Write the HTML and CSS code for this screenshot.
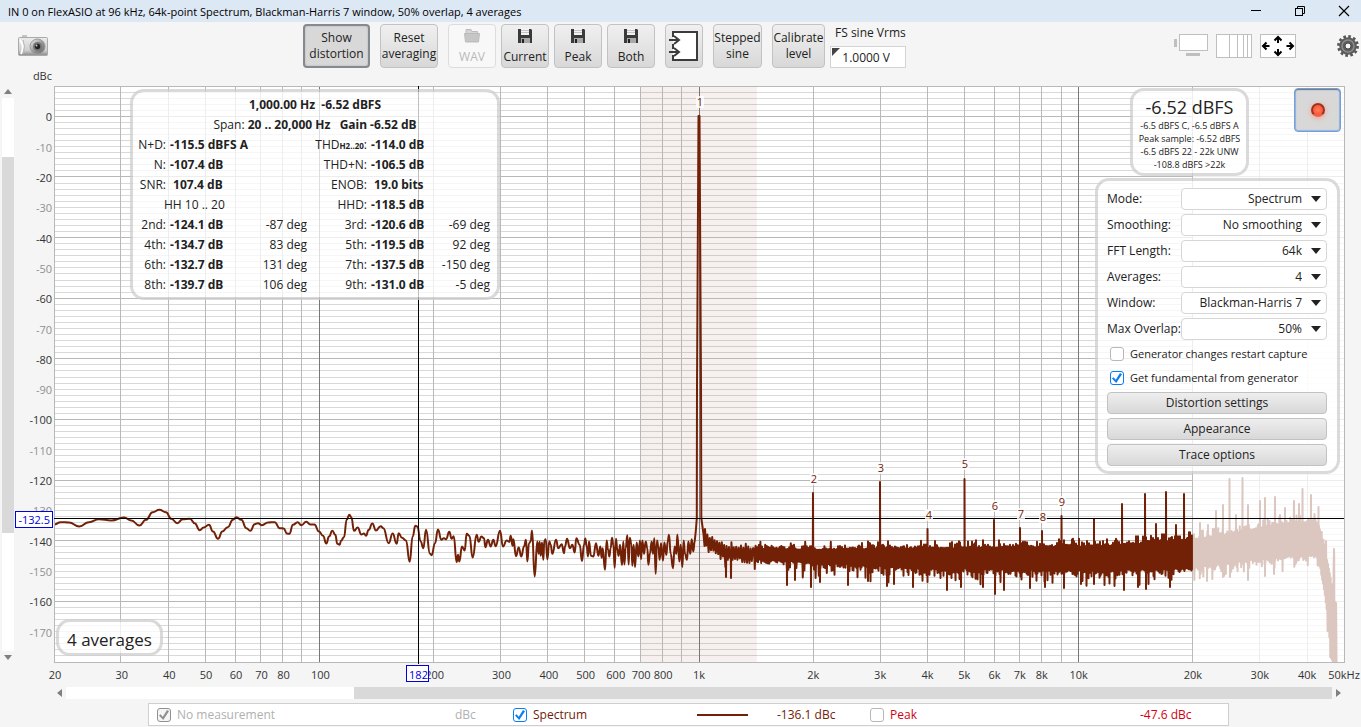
FILE: index.html
```html
<!DOCTYPE html>
<html lang="en">
<head>
<meta charset="utf-8">
<title>Spectrum analyser</title>
<link rel="stylesheet" href="styles.css">
</head>
<body>
<header class="titlebar">
  <h1 class="title">IN 0 on FlexASIO at 96 kHz, 64k-point Spectrum, Blackman-Harris 7 window, 50% overlap, 4 averages</h1>
  <div class="window-buttons">
    <button class="window-button" aria-label="Minimize"><svg width="12" height="12"><path d="M1 5.500h10" stroke="#000"/></svg></button>
    <button class="window-button" aria-label="Restore"><svg width="12" height="12" fill="none" stroke="#000"><rect x="1.500" y="3.500" width="7" height="7"/><path d="M3.500 3.500v-2h7v7h-2"/></svg></button>
    <button class="window-button" aria-label="Close"><svg width="12" height="12"><path d="M1 1l10 10M11 1L1 11" stroke="#000" stroke-width="1.200"/></svg></button>
  </div>
</header>

<nav class="toolbar">
  <button class="icon-button camera" aria-label="Capture image">
    <svg width="30" height="22" viewBox="0 0 30 22">
      <defs>
        <linearGradient id="body" x1="0" y1="0" x2="0" y2="1"><stop offset="0" stop-color="#ececec"/><stop offset=".7" stop-color="#d0d0d0"/><stop offset="1" stop-color="#8a8a8a"/></linearGradient>
        <linearGradient id="ring" x1="0" y1="0" x2="1" y2="1"><stop offset="0" stop-color="#f4f4f4"/><stop offset=".5" stop-color="#9a9a9a"/><stop offset="1" stop-color="#666"/></linearGradient>
      </defs>
      <rect x="4" y="0" width="5" height="2" fill="#c4c4c4"/>
      <rect x=".5" y="2.500" width="29" height="18" rx="1" fill="url(#body)" stroke="#aaa"/>
      <path d="M2 5q5 6 1 14" fill="none" stroke="#fff" stroke-width="2"/>
      <path d="M5 5q3 6 0 14" fill="none" stroke="#b5b5b5"/>
      <circle cx="19.500" cy="11.500" r="7.500" fill="url(#ring)" stroke="#999"/>
      <circle cx="19.500" cy="11.500" r="4.500" fill="#777"/>
      <circle cx="19.500" cy="11.500" r="2.700" fill="#222"/>
      <circle cx="18.500" cy="10.500" r="1" fill="#c8c8c8"/>
    </svg>
  </button>
  <div class="tools">
    <button class="tool tool-show is-pressed" aria-pressed="true">Show<br>distortion</button>
    <button class="tool tool-reset">Reset<br>averaging</button>
    <button class="tool tool-save" disabled>
      <svg width="16" height="16" viewBox="0 0 16 16"><path d="M2 3.500v-2h5l1 2h5.500v3h-11.500z" fill="#d4d4d4" stroke="#bbb"/><path d="M.5 5.500h15l-1 8.500h-13z" fill="#c6c6c6" stroke="#bbb"/></svg>
      <span>WAV</span></button>
    <div class="save-group">
      <button class="tool tool-save"><svg width="16" height="16" viewBox="0 0 16 16"><use href="#disk"/></svg><span>Current</span></button>
      <button class="tool tool-save"><svg width="16" height="16" viewBox="0 0 16 16"><use href="#disk"/></svg><span>Peak</span></button>
      <button class="tool tool-save"><svg width="16" height="16" viewBox="0 0 16 16"><use href="#disk"/></svg><span>Both</span></button>
    </div>
    <button class="tool tool-input" aria-label="Input setup">
      <svg width="32" height="32" viewBox="0 0 32 32" fill="none" stroke="#3c3c3c" stroke-width="2"><path d="M5 2h24v28H5z" fill="#fff" stroke="none"/><path d="M5 7V2h24v28H5v-5M5 14v5"/><path d="M1 10h10M6 6l5 4-5 4M1 22h10M6 18l5 4-5 4"/></svg>
    </button>
    <button class="tool tool-stepped">Stepped<br>sine</button>
    <button class="tool tool-cal">Calibrate<br>level</button>
  </div>
  <div class="vrms">
    <label for="vrms">FS sine Vrms</label>
    <div class="vrms-box"><input id="vrms" class="vrms-input" type="text" value="1.0000 V"></div>
  </div>
  <div class="view-buttons">
    <button class="icon-button" aria-label="Scrollbars"><svg width="36" height="24" viewBox="0 0 36 24"><rect x="7.500" y=".5" width="28" height="16" fill="#fff" stroke="#bfbfbf"/><rect x="2" y="5" width="3" height="8" fill="#bfbfbf"/><rect x="14" y="19" width="14" height="3" fill="#bfbfbf"/></svg></button>
    <button class="icon-button" aria-label="Frequency axis"><svg width="36" height="24" viewBox="0 0 36 24"><rect x=".5" y=".5" width="35" height="23" fill="#fff" stroke="#bfbfbf"/><path d="M13.500 0v24M21.500 0v24M27.500 0v24M31.500 0v24" stroke="#bfbfbf"/></svg></button>
    <button class="icon-button" aria-label="Graph limits"><svg width="36" height="24" viewBox="0 0 36 24"><rect x=".5" y=".5" width="35" height="23" fill="#fff" stroke="#bfbfbf"/><g fill="none" stroke="#000" stroke-width="2"><path d="M18 3v6M14.500 6.500L18 3l3.500 3.500M18 15v6M14.500 17.500L18 21l3.500-3.500M3 12h6.500M6.500 8.500L3 12l3.500 3.500M26.500 12H33M29.500 8.500L33 12l-3.500 3.500"/></g></svg></button>
    <button class="icon-button gear" aria-label="Settings"><svg width="22" height="22" viewBox="0 0 22 22"><circle cx="11" cy="11" r="9.500" fill="none" stroke="#555" stroke-width="2.800" stroke-dasharray="2.600 2.374"/><circle cx="11" cy="11" r="5.800" fill="none" stroke="#5c5c5c" stroke-width="6"/><circle cx="11" cy="11" r="6" fill="none" stroke="#8c8c8c" stroke-width="1.500"/><circle cx="11" cy="11" r="3" fill="#f5f5f5" stroke="#444"/></svg></button>
  </div>
</nav>

<main class="workspace">
  <div class="vscroll">
    <span class="arrow arrow-up"></span>
    <div class="vtrack"><div class="vthumb"></div></div>
    <span class="arrow arrow-down"></span>
  </div>
  <section class="chart">
    <svg id="plot" class="plot" role="img" aria-label="Spectrum plot"></svg>

    <div class="panel distortion">
      <table class="readout">
        <colgroup><col class="c-label"><col class="c-value"><col class="c-deg"><col class="c-label2"><col class="c-value"><col></colgroup>
        <tr><td colspan="6" class="head"><b>1,000.00 Hz &nbsp;-6.52 dBFS</b></td></tr>
        <tr><td colspan="6" class="head">Span: <b>20 .. 20,000 Hz &nbsp; Gain -6.52 dB</b></td></tr>
        <tr><th>N+D:</th><td colspan="2"><b>-115.5 dBFS A</b></td><th>THD<small>H2..20</small>:</th><td><b>-114.0 dB</b></td><td></td></tr>
        <tr><th>N:</th><td><b>-107.4 dB</b></td><td></td><th>THD+N:</th><td><b>-106.5 dB</b></td><td></td></tr>
        <tr><th>SNR:</th><td><b>&nbsp;107.4 dB</b></td><td></td><th>ENOB:</th><td><b>&nbsp;19.0 bits</b></td><td></td></tr>
        <tr><td colspan="3" class="hh">HH 10 .. 20</td><th>HHD:</th><td><b>-118.5 dB</b></td><td></td></tr>
        <tr><th>2nd:</th><td><b>-124.1 dB</b></td><td class="deg">-87 deg</td><th>3rd:</th><td><b>-120.6 dB</b></td><td class="deg last">-69 deg</td></tr>
        <tr><th>4th:</th><td><b>-134.7 dB</b></td><td class="deg">83 deg</td><th>5th:</th><td><b>-119.5 dB</b></td><td class="deg last">92 deg</td></tr>
        <tr><th>6th:</th><td><b>-132.7 dB</b></td><td class="deg">131 deg</td><th>7th:</th><td><b>-137.5 dB</b></td><td class="deg last">-150 deg</td></tr>
        <tr><th>8th:</th><td><b>-139.7 dB</b></td><td class="deg">106 deg</td><th>9th:</th><td><b>-131.0 dB</b></td><td class="deg last">-5 deg</td></tr>
      </table>
    </div>

    <div class="panel level">
      <div class="level-main">-6.52 dBFS</div>
      <div>-6.5 dBFS C, -6.5 dBFS A</div>
      <div>Peak sample: -6.52 dBFS</div>
      <div>-6.5 dBFS 22 - 22k UNW</div>
      <div>-108.8 dBFS &gt;22k</div>
    </div>

    <button class="record" aria-label="Record"><span class="record-light"></span></button>

    <form class="panel settings">
      <div class="field"><label for="mode">Mode:</label><span class="drop"><select id="mode"><option>Spectrum</option></select></span></div>
      <div class="field"><label for="smooth">Smoothing:</label><span class="drop"><select id="smooth"><option>No smoothing</option></select></span></div>
      <div class="field"><label for="fft">FFT Length:</label><span class="drop"><select id="fft"><option>64k</option></select></span></div>
      <div class="field"><label for="avg">Averages:</label><span class="drop"><select id="avg"><option>4</option></select></span></div>
      <div class="field"><label for="win">Window:</label><span class="drop"><select id="win"><option>Blackman-Harris 7</option></select></span></div>
      <div class="field"><label for="lap">Max Overlap:</label><span class="drop"><select id="lap"><option>50%</option></select></span></div>
      <div class="checks">
        <label class="check"><input type="checkbox">Generator changes restart capture</label>
        <label class="check"><input type="checkbox" checked>Get fundamental from generator</label>
      </div>
      <button type="button" class="wide">Distortion settings</button>
      <button type="button" class="wide">Appearance</button>
      <button type="button" class="wide">Trace options</button>
    </form>

    <div class="panel averages">4 averages</div>
  </section>
</main>

<div class="hscroll">
  <span class="arrow arrow-left"></span>
  <div class="htrack"><div class="hthumb"></div></div>
  <span class="arrow arrow-right"></span>
</div>

<footer class="legend">
  <label class="check muted"><input type="checkbox" checked disabled>No measurement</label>
  <span class="muted">dBc</span>
  <label class="check trace"><input type="checkbox" checked>Spectrum</label>
  <span class="swatch"></span>
  <span class="trace">-136.1 dBc</span>
  <label class="check peak"><input type="checkbox">Peak</label>
  <span class="peak">-47.6 dBc</span>
</footer>

<svg class="symbols" width="0" height="0" aria-hidden="true">
  <symbol id="disk" viewBox="0 0 16 16"><path d="M1 1h13l1 1v13H1z" fill="#3a3a3a"/><rect x="4" y="0" width="8" height="7" fill="#f2f2f2"/><path d="M4 2.500h8M4 4.500h8" stroke="#c4c4c4"/><rect x="4" y="10" width="9" height="5" fill="#a8a8a8"/><rect x="5" y="11" width="2" height="4" fill="#222"/></symbol>
</svg>
<script src="chart.js"></script>
</body>
</html>
```
FILE: styles.css
```css
* { box-sizing: border-box; }

body {
  margin: 0;
  min-height: 100vh;
  display: flex;
  flex-direction: column;
  background: #f5f5f5;
  color: #222;
  font: 12px/16px "Open Sans", "Noto Sans", sans-serif;
}

button, input, select { font: inherit; color: inherit; }
button { padding: 0; }

.titlebar {
  height: 22px;
  flex: none;
  display: flex;
  align-items: center;
  justify-content: space-between;
  padding: 0 11px 0 8px;
  background: #dde8f5;
  color: #000;
}
.title { margin: 0; padding-top: 2px; font-size: 11px; font-weight: 400; white-space: nowrap; }
.window-buttons { display: flex; gap: 32px; }
.window-button, .icon-button { border: 0; background: none; display: flex; }

.toolbar {
  height: 48px;
  flex: none;
  display: flex;
  align-items: flex-start;
  padding: 2px 2px 0 18px;
}
.camera { margin: 11px 255px 0 0; }
.tools { display: flex; gap: 10px; flex: none; }
.save-group { display: flex; gap: 5px; margin-left: -5px; }
.tool {
  height: 44px;
  border: 1px solid #c2c2c2;
  border-radius: 4px;
  background: linear-gradient(#f0f0f0, #d8d8d8);
  white-space: nowrap;
  display: flex;
  flex-direction: column;
  align-items: center;
  justify-content: center;
}
.tool:disabled { background: #f8f8f8; border-color: #dcdcdc; color: #b8b8b8; }
.tool.is-pressed { background: #d8d8d8; border: 2px solid #858a90; box-shadow: inset 0 0 2px #aaa; }
.tool-show { width: 67px; }
.tool-reset { width: 58px; }
.tool-save { width: 48px; gap: 5px; }
.tool-input { width: 38px; }
.tool-stepped { width: 49px; }
.tool-cal { width: 53px; }

.vrms { margin-left: 5px; width: 76px; }
.vrms label { display: block; margin: 1px 0 5px 5px; white-space: nowrap; }
.vrms-box { position: relative; }
.vrms-box::before {
  content: "";
  position: absolute;
  left: 2px;
  top: 2px;
  border-top: 8px solid #444;
  border-right: 8px solid transparent;
}
.vrms-input {
  width: 100%;
  height: 22px;
  border: 1px solid #d4d4d4;
  background: #fff;
  text-align: right;
  padding: 0 15px 0 0;
}

.view-buttons { margin: 10px 0 0 auto; display: flex; gap: 8px; align-items: center; }
.gear { margin-left: 33px; }

.workspace { flex: 1; display: flex; min-height: 614px; }
.vscroll {
  width: 16px;
  padding: 19px 2px 24px;
  display: flex;
  flex-direction: column;
  align-items: center;
  gap: 4px;
}
.vtrack { flex: 1; width: 12px; background: #fff; display: flex; flex-direction: column; }
.vthumb { margin-top: 59px; height: 68%; background: #d9d9d9; }
.arrow { border: 4px solid transparent; flex: none; }
.arrow-up { border-top: 0; border-bottom: 5px solid #808080; }
.arrow-down { border-bottom: 0; border-top: 5px solid #808080; }
.arrow-left { border-left: 0; border-right: 5px solid #808080; }
.arrow-right { border-right: 0; border-left: 5px solid #808080; }

.chart { flex: 1; position: relative; min-width: 0; }
.plot { position: absolute; left: 0; top: 0; width: 100%; height: 100%; overflow: visible; }
.axis { font-size: 11px; fill: #333; }
.axis-minor { fill: #909090; }
.axis-cursor { fill: #0000e0; }
.harmonic { font-size: 11px; fill: #722107; }

.panel {
  position: absolute;
  border: 3px solid rgba(205, 205, 205, .75);
  border-radius: 14px;
  background: rgba(255, 255, 255, .75);
  background-clip: padding-box;
}

.distortion { left: 114px; top: 19px; width: 370px; padding: 3px 1px 2px; }
.readout { width: 100%; table-layout: fixed; border-collapse: collapse; }
.readout td, .readout th { height: 20px; padding: 0 0 0 2px; white-space: nowrap; font-weight: 400; }
.readout b { font-family: "Noto Sans", "Open Sans", sans-serif; }
.readout th { text-align: right; padding: 0 2px 0 0; }
.readout small { font-size: 8px; font-weight: 700; }
.readout .head { text-align: center; padding: 0; }
.readout .hh { padding-left: 30px; }
.readout .deg { text-align: right; padding: 0; }
.readout .last { padding-right: 6px; }
.c-label { width: 34px; }
.c-value { width: 70px; }
.c-deg { width: 69px; }
.c-label2 { width: 62px; }

.level {
  right: 112px;
  top: 18px;
  width: 119px;
  padding: 5px 0 2px;
  text-align: center;
  font-size: 9px;
  line-height: 13px;
  white-space: nowrap;
}
.level-main { font-size: 18px; line-height: 23px; }

.record {
  position: absolute;
  right: 20px;
  top: 18px;
  width: 47px;
  height: 44px;
  border: 1px solid #6f9fe0;
  border-radius: 4px;
  background: #d8d8d8;
  box-shadow: inset 0 1px 1px #777, inset 0 0 1px 1px #9ab6dc;
  display: grid;
  place-items: center;
}
.record-light {
  width: 14px;
  height: 14px;
  border-radius: 50%;
  border: 2px solid #993322;
  border-bottom-color: #f06048;
  background: radial-gradient(#ff8060, #ff4422);
  box-shadow: 0 1px 5px #ff9a80;
}

.settings { right: 21px; top: 108px; width: 245px; padding: 7px 10px 5px 9px; display: flex; flex-direction: column; }
.field { display: grid; grid-template-columns: 74px 1fr; align-items: center; height: 22px; margin-bottom: 4px; white-space: nowrap; }
.drop { position: relative; }
.drop::after {
  content: "";
  position: absolute;
  right: 6px;
  top: 8px;
  border: 5px solid transparent;
  border-top: 6px solid #222;
  border-bottom: 0;
  pointer-events: none;
}
.drop select {
  display: block;
  appearance: none;
  width: 100%;
  height: 22px;
  border: 1px solid #d6d6d6;
  border-radius: 4px;
  background: #fff;
  text-align-last: right;
  padding: 0 24px 0 0;
}
.checks { margin: -2px 0 2px; }
.checks .check { height: 24px; padding-left: 3px; font-size: 11px; }
.check { display: flex; align-items: center; gap: 6px; white-space: nowrap; }
.check input {
  appearance: none;
  flex: none;
  display: grid;
  place-items: center;
  width: 14px;
  height: 14px;
  margin: 0;
  border: 1px solid #b8b8b8;
  border-radius: 3px;
  background: #fff;
  color: #0a7cf5;
}
.check input:checked { border-color: currentColor; }
.check input:disabled { color: #909090; background: #f5f5f5; }
.check input:checked::before {
  content: "";
  width: 10px;
  height: 10px;
  background: currentColor;
  clip-path: polygon(0 55%, 15% 42%, 38% 68%, 80% 0, 100% 12%, 42% 100%);
}
.wide {
  height: 22px;
  border: 1px solid #c2c2c2;
  border-radius: 4px;
  background: linear-gradient(#eeeeee, #d8d8d8);
}
.wide + .wide { margin-top: 4px; }

.averages { left: 40px; bottom: 28px; padding: 5px 8px 1px; font-size: 17px; line-height: 25px; }

.hscroll { flex: none; display: flex; align-items: center; gap: 4px; padding: 3px 20px 0 57px; }
.htrack { flex: 1; height: 12px; background: #fff; display: grid; grid-template-columns: 288fr 978fr; }
.hthumb { grid-column: 2; background: #d9d9d9; }

.legend {
  flex: none;
  height: 23px;
  margin: 4px 132px 1px 148px;
  border: 1px solid #cfcfcf;
  background: #fff;
  padding: 1px 0 0 8px;
  display: grid;
  grid-template-columns: 298fr 58fr 184fr 80fr 93fr 270fr 88fr;
  align-items: center;
  white-space: nowrap;
}
.muted { color: #b0b0b0; }
.trace { color: #722107; }
.peak { color: #d00010; }
.swatch { width: 51px; height: 2px; background: #722107; }
.symbols { position: absolute; }
```
FILE: chart.js
```js
const SVG = 'http://www.w3.org/2000/svg';
const plot = document.getElementById('plot');
const MARGIN = { left: 38, top: 16, right: 17, bottom: 22 };
const F_MIN = 20, F_MAX = 50000, DB_MAX = 10, DB_MIN = -180;

// Trace samples live on a 1290 x 576 grid that is stretched to the plot area.
const GRID_W = 1290, GRID_H = 576;

// Low frequency part of the trace, in thirds of a grid unit.
const LOW = [
  0,174, 20,167, 45,168, 76,180, 105,167, 135,158, 172,162, 210,153, 232,162, 256,177, 276,160, 296,137,
  316,130, 336,137, 352,157, 370,170, 386,158, 408,157, 422,170, 437,191, 449,183, 465,175, 477,195,
  492,217, 505,195, 521,182, 537,160, 547,152, 562,160, 577,185, 589,193, 602,173, 612,170, 624,176,
  642,168, 662,167, 677,185, 689,186, 699,201, 706,202, 717,175, 731,167, 742,176, 757,166, 769,174,
  781,174, 795,195, 807,208, 817,231, 825,210, 835,193, 844,205, 850,232, 857,235, 861,223, 870,212,
  878,160, 886,145, 892,152, 900,193, 911,183, 922,204, 930,201, 936,208, 944,190, 955,171, 966,192,
  980,179, 988,185, 1004,230, 1016,201, 1028,232, 1034,200, 1044,214, 1056,222, 1067,286, 1076,210,
  1084,178, 1090,180, 1100,225, 1108,245, 1116,190, 1128,262, 1133,266, 1143,230, 1152,189, 1162,220,
  1170,215, 1176,218, 1186,196, 1193,217, 1199,209, 1208,287, 1212,265, 1216,285, 1224,240, 1232,252,
  1238,202, 1246,208, 1256,273, 1268,205, 1274,226, 1282,210, 1290,215, 1294,242, 1302,220, 1310,240,
  1318,220, 1325,239, 1338,193, 1347,240, 1358,222, 1366,226, 1370,208, 1376,238, 1378,218, 1386,269,
  1394,243, 1402,270, 1410,240, 1416,220, 1420,285, 1425,230, 1430,225, 1434,192, 1442,330, 1450,225,
  1454,262, 1457,226, 1460,268, 1464,228, 1468,280, 1471,222, 1475,218, 1480,278, 1486,225, 1490,235,
  1495,262, 1506,220, 1513,245, 1523,233, 1530,260, 1533,240, 1539,217, 1548,245, 1555,235, 1562,258,
  1567,215, 1577,235, 1584,283, 1590,235, 1594,216, 1598,240, 1602,270, 1605,225, 1611,268, 1618,270,
  1626,230, 1633,268, 1639,240, 1643,274, 1646,245, 1653,310, 1658,222, 1662,250, 1666,270, 1670,245,
  1674,214, 1678,235, 1682,304, 1686,217, 1690,250, 1694,268, 1698,235, 1704,296, 1708,225, 1711,294,
  1715,245, 1720,206, 1724,294, 1727,214, 1732,230, 1735,298, 1739,235, 1743,302, 1748,228, 1753,270,
  1758,222, 1761,278, 1765,222, 1770,262, 1775,225, 1780,245, 1783,295, 1788,260, 1793,225, 1797,262,
  1801,215, 1805,322, 1809,222, 1813,240, 1817,280, 1821,230, 1827,282, 1831,228, 1837,265, 1841,225,
  1845,205, 1850,262, 1857,305, 1862,240, 1867,262, 1870,204, 1876,285, 1880,235, 1885,302, 1889,222,
  1893,262, 1899,280, 1903,225, 1909,262, 1913,218, 1918,255, 1922,225
];

const SPIKES = [
  759,407, 826,396, 873.5,443, 910.5,393, 940,434, 966,442, 988,445, 1007.5,430, 1040,433, 1068,418,
  1091,408, 1102,438, 1112,406, 1122,439, 1130,408,
  1146,437, 1154,439, 1162,425, 1169,419, 1175.5,393, 1182,429, 1188.5,392, 1194,419, 1206,415,
  1211,412, 1221,411, 1226,429, 1231,422, 1240,415, 1245,418, 1248.5,403, 1257,409, 1264.5,421,
  1272,455, 1280,463
];
const DIPS = [
  672,491, 677,492, 733,499, 741,494, 757,501, 766,496, 794,499, 814,495, 833,500, 840,498, 859,501,
  893,504, 907,501, 929,501, 941,508, 950,504, 976,502, 991,501, 1010,502, 1027,498, 1040,498,
  1070,504, 1084,501, 1092,503, 1116,501, 1153,495, 1169,491, 1176,491, 1194,494, 1211,490, 1220,488
];
// x, usual top, usual bottom of the noise floor
const FLOOR = [
  [652, 451, 466], [665, 457, 474], [672, 461, 478], [700, 463, 480], [760, 464, 483],
  [850, 463, 488], [950, 462, 490], [1060, 460, 491], [1139, 454, 488], [1180, 448, 482],
  [1230, 438, 477], [1262, 436, 474], [1267, 448, 490], [1273, 475, 530], [1277, 495, 576], [1284, 530, 590]
];
const HARMONICS = [
  [1, 645, 16], [2, 759, 393], [3, 826, 382], [4, 874, 429], [5, 910, 378], [6, 940, 420],
  [7, 966, 428], [8, 988, 431], [9, 1007, 416]
];

function floorAt(x) {
  let i = 1;
  while (i < FLOOR.length - 1 && FLOOR[i][0] < x) i++;
  const a = FLOOR[i - 1], b = FLOOR[i];
  const t = Math.min(1, Math.max(0, (x - a[0]) / (b[0] - a[0])));
  return [a[1] + t * (b[1] - a[1]), a[2] + t * (b[2] - a[2])];
}

let seed = 7;
function rand() {
  seed = (seed * 16807) % 2147483647;
  return seed / 2147483647;
}

// Alternating samples above and below the floor, with exponential tails.
function noise(from, to, step) {
  const points = [];
  let up = true;
  for (let x = from; x < to; x += step) {
    const [top, bottom] = floorAt(x);
    const tail = -Math.log(rand());
    const y = up ? top - Math.min(2.5 * tail, 8)
                 : bottom - 7 + Math.min(3.5 * tail, 16);
    points.push([x, Math.min(GRID_H, y)]);
    up = !up;
  }
  return points;
}

function withPeaks(points, from, to) {
  const add = list => {
    for (let i = 0; i < list.length; i += 2) {
      const x = list[i];
      if (x < from || x >= to) continue;
      points.push([x - 0.2, 470], [x, list[i + 1]], [x + 0.2, 470]);
    }
  };
  add(SPIKES);
  add(DIPS);
  return points.sort((a, b) => a[0] - b[0]);
}

const lowPoints = [];
for (let i = 0; i < LOW.length; i += 2) lowPoints.push([LOW[i] / 3, LOW[i + 1] / 3 + 380.5]);
const audible = [[641.8, 445], [642.8, 432], [643, 300], [644.5, 30], [645.5, 30], [647, 300], [647.3, 432], [649.5, 448], [650.5, 460]].concat(
  withPeaks([...noise(651, 700, 1.2), ...noise(700, 780, 0.8), ...noise(780, 1139, 0.5)], 652, 1139)
);
const ultrasonic = withPeaks(noise(1139, 1283, 0.45), 1139, 1283);

function el(name, attrs, text) {
  const node = document.createElementNS(SVG, name);
  for (const key in attrs) node.setAttribute(key, attrs[key]);
  if (text !== undefined) node.textContent = text;
  plot.appendChild(node);
  return node;
}

function draw() {
  const { width, height } = plot.getBoundingClientRect();
  const left = MARGIN.left, top = MARGIN.top;
  const w = width - left - MARGIN.right, h = height - top - MARGIN.bottom;
  const right = left + w, bottom = top + h;
  const X = f => left + w * Math.log10(f / F_MIN) / Math.log10(F_MAX / F_MIN);
  const Y = db => top + h * (DB_MAX - db) / (DB_MAX - DB_MIN);
  const snap = v => Math.floor(v) + 0.5;
  const at = ([x, y]) => (left + x * w / GRID_W).toFixed(2) + ' ' + (top + y * h / GRID_H).toFixed(2);
  const line = (x1, y1, x2, y2, stroke) => el('path', { d: `M${x1} ${y1}L${x2} ${y2}`, stroke });

  plot.replaceChildren();
  el('rect', { x: left, y: top, width: w, height: h, fill: '#fff' });
  el('rect', { x: X(700), y: top, width: X(1420) - X(700), height: h, fill: '#f6f0ee' });

  for (let db = 8; db > DB_MIN; db -= 2) {
    line(left, snap(Y(db)), right, snap(Y(db)), db % 20 === 0 ? '#b8b8b8' : 'rgba(0,0,0,.15)');
  }
  for (let decade = 10; decade <= 10000; decade *= 10) {
    for (let n = 1; n < 10; n++) {
      const f = n * decade;
      if (f <= F_MIN || f >= F_MAX) continue;
      line(snap(X(f)), top, snap(X(f)), bottom, n === 1 ? '#777' : '#b8b8b8');
    }
  }

  const stroke = { fill: 'none', stroke: '#722107', 'stroke-width': 2, 'stroke-linejoin': 'round' };
  let d = 'M' + at(lowPoints[0]);
  for (let i = 1; i < lowPoints.length; i++) {
    const a = lowPoints[i - 1], b = lowPoints[i];
    const mid = (a[0] + b[0]) / 2;
    d += `C${at([mid, a[1]])} ${at([mid, b[1]])} ${at(b)}`;
  }
  el('path', { ...stroke, d: d + 'L' + audible.map(at).join('L') });
  el('path', { ...stroke, d: 'M' + ultrasonic.map(at).join('L') });
  el('rect', { x: X(20000), y: top, width: right - X(20000), height: h, fill: '#fff', 'fill-opacity': 0.75 });
  el('rect', { x: left + 0.5, y: top + 0.5, width: w, height: h, fill: 'none', stroke: '#b8b8b8' });

  const cursorX = snap(X(182)), cursorY = snap(Y(-132.5));
  line(left, cursorY, right, cursorY, '#000');
  line(cursorX, top, cursorX, bottom + 2, '#000');

  for (const [n, x, y] of HARMONICS) {
    const px = left + x * w / GRID_W + 1, py = top + y * h / GRID_H;
    el('rect', { x: px - 4, y: py - 6, width: 8, height: 12, fill: '#fff', 'fill-opacity': 0.8 });
    el('text', { x: px, y: py + 4, class: 'harmonic', 'text-anchor': 'middle' }, n);
  }

  el('text', { x: left - 2, y: 10, class: 'axis', 'text-anchor': 'end' }, 'dBc');
  for (let db = 0; db > DB_MIN; db -= 10) {
    el('text', { x: left - 2, y: Y(db) + 5, class: db % 20 ? 'axis axis-minor' : 'axis', 'text-anchor': 'end' }, db);
  }
  const ticks = [20, 30, 40, 50, 60, 70, 80, 100, 200, 300, 400, 500, 600, 700, 800];
  for (const f of ticks) {
    el('text', { x: X(f) + 1, y: bottom + 17, class: 'axis', 'text-anchor': 'middle' }, f);
  }
  for (const k of [1, 2, 3, 4, 5, 6, 7, 8, 10, 20, 30, 40, 50]) {
    el('text', { x: X(k * 1000), y: bottom + 17, class: 'axis', 'text-anchor': 'middle' }, k + (k === 50 ? 'kHz' : 'k'));
  }

  el('rect', { x: -0.5, y: cursorY - 7, width: 37, height: 16, fill: '#fff', stroke: '#0000e0' });
  el('text', { x: 34, y: cursorY + 5, class: 'axis axis-cursor', 'text-anchor': 'end' }, '-132.5');
  el('rect', { x: cursorX - 12, y: bottom + 3.5, width: 22, height: 16, fill: '#fff', stroke: '#0000e0' });
  el('text', { x: cursorX, y: bottom + 17, class: 'axis axis-cursor', 'text-anchor': 'middle' }, '182');
}

draw();
window.addEventListener('resize', draw);
```
